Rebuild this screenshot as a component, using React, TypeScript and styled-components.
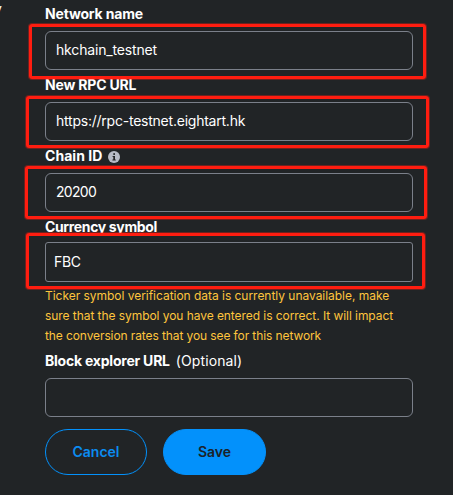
import React from 'react';
import styled, { createGlobalStyle } from 'styled-components';

const GlobalStyle = createGlobalStyle`
  * { box-sizing: border-box; }
  body { margin: 0; background: #212426; }
`;

const Page = styled.main`
  position: relative;
  width: 453px;
  height: 495px;
  overflow: hidden;
  background: #212426;
  color: #fff;
  font-family: Inter, 'Liberation Sans', sans-serif;
  font-size: 14px;
`;

const EdgeText = styled.span`
  position: absolute;
  left: -6px;
  top: -1px;
  line-height: 20px;
  font-size: 14px;
`;

const Form = styled.form`
  display: flex;
  flex-direction: column;
  width: 368px;
  margin-left: 45px;
  padding-top: 4px;
`;

const Field = styled.div<{ $height: number }>`
  display: flex;
  flex-direction: column;
  height: ${(p) => p.$height}px;
`;

const LabelRow = styled.div<{ $height: number }>`
  display: flex;
  align-items: flex-start;
  height: ${(p) => p.$height}px;
  line-height: 20px;
  white-space: nowrap;
`;

const Label = styled.label<{ $spacing: number }>`
  font-weight: 750;
  letter-spacing: ${(p) => p.$spacing}px;
`;

const Optional = styled.span`
  margin-left: 6px;
  letter-spacing: 0.1px;
`;

const InfoIcon = styled.svg`
  margin: 5px 0 0 6px;
`;

const InputFrame = styled.div`
  position: relative;
`;

const Input = styled.input<{ $height: number; $radius: number; $pad: number; $spacing: number }>`
  display: block;
  width: 100%;
  height: ${(p) => p.$height}px;
  padding: 0 ${(p) => p.$pad}px 2px;
  border: 1px solid #7b808a;
  border-radius: ${(p) => p.$radius}px;
  outline: none;
  background: transparent;
  color: #fff;
  font: inherit;
  letter-spacing: ${(p) => p.$spacing}px;
`;

const Marker = styled.div<{ $inset: string }>`
  position: absolute;
  inset: ${(p) => p.$inset};
  border: 3px solid #ff1d10;
  border-radius: 3px;
  box-shadow: 0 0 0 1px rgba(255, 29, 16, 0.35);
  pointer-events: none;
`;

const Warning = styled.p`
  height: 69px;
  margin: 0;
  padding-top: 4px;
  color: #ffc53d;
  font-size: 12px;
  line-height: 20px;
  white-space: nowrap;
`;

const WarningLine = styled.span<{ $spacing: number }>`
  display: block;
  letter-spacing: ${(p) => p.$spacing}px;
`;

const Actions = styled.div`
  display: flex;
  gap: 16px;
`;

const Button = styled.button<{ $primary?: boolean }>`
  width: ${(p) => (p.$primary ? 103 : 102)}px;
  height: 46px;
  padding: 0 0 2px;
  border: 1px solid #0391fb;
  border-radius: 23px;
  background: ${(p) => (p.$primary ? '#0391fb' : 'transparent')};
  color: ${(p) => (p.$primary ? '#1b2229' : '#0b8cf0')};
  font: 600 14px Inter, 'Liberation Sans', sans-serif;
`;

type FieldData = {
  label: string;
  value: string;
  height: number;
  labelHeight?: number;
  labelSpacing: number;
  valueSpacing?: number;
  inputHeight?: number;
  radius?: number;
  pad?: number;
  marker?: string;
  info?: boolean;
  optional?: boolean;
};

const networkFields: FieldData[] = [
  { label: 'Network name', value: 'hkchain_testnet', height: 71, labelSpacing: -0.17, valueSpacing: -0.16, marker: '-7px -13px -9px -16px' },
  { label: 'New RPC URL', value: 'https://rpc-testnet.eightart.hk', height: 71, labelSpacing: -0.18, valueSpacing: -0.23, marker: '-6px -16px -7px -19px' },
  { label: 'Chain ID', value: '20200', height: 71, labelSpacing: 0.04, valueSpacing: -0.7, marker: '-7px -14px -7px -20px', info: true },
  { label: 'Currency symbol', value: 'FBC', height: 65, labelHeight: 25, labelSpacing: -0.35, valueSpacing: -0.3, inputHeight: 40, radius: 3, pad: 8, marker: '-9px -12px -7px -19px' },
];

const explorerField: FieldData = {
  label: 'Block explorer URL', value: '', height: 78, labelSpacing: -0.22, optional: true,
};

function FormField({ data }: { data: FieldData }) {
  return (
    <Field $height={data.height}>
      <LabelRow $height={data.labelHeight ?? 27}>
        <Label $spacing={data.labelSpacing}>{data.label}</Label>
        {data.optional && <Optional>(Optional)</Optional>}
        {data.info && (
          <InfoIcon width="12" height="12" viewBox="0 0 12 12">
            <circle cx="6" cy="6" r="6" fill="#b7bbc6" />
            <rect x="5.3" y="2.2" width="1.7" height="1.7" fill="#212426" />
            <path d="M4.6 4.9H7V8.5H7.8V9.6H4.4V8.5H5.3V6H4.6Z" fill="#212426" />
          </InfoIcon>
        )}
      </LabelRow>
      <InputFrame>
        <Input
          aria-label={data.label}
          defaultValue={data.value}
          $height={data.inputHeight ?? 39}
          $radius={data.radius ?? 6}
          $pad={data.pad ?? 10}
          $spacing={data.valueSpacing ?? 0}
        />
        {data.marker && <Marker $inset={data.marker} />}
      </InputFrame>
    </Field>
  );
}

export default function App() {
  return (
    <Page>
      <GlobalStyle />
      <EdgeText>y</EdgeText>
      <Form onSubmit={(e) => e.preventDefault()}>
        {networkFields.map((f) => <FormField key={f.label} data={f} />)}
        <Warning>
          <WarningLine $spacing={-0.03}>Ticker symbol verification data is currently unavailable, make</WarningLine>
          <WarningLine $spacing={-0.06}>sure that the symbol you have entered is correct. It will impact</WarningLine>
          <WarningLine $spacing={-0.1}>the conversion rates that you see for this network</WarningLine>
        </Warning>
        <FormField data={explorerField} />
        <Actions>
          <Button type="button">Cancel</Button>
          <Button type="submit" $primary>Save</Button>
        </Actions>
      </Form>
    </Page>
  );
}
